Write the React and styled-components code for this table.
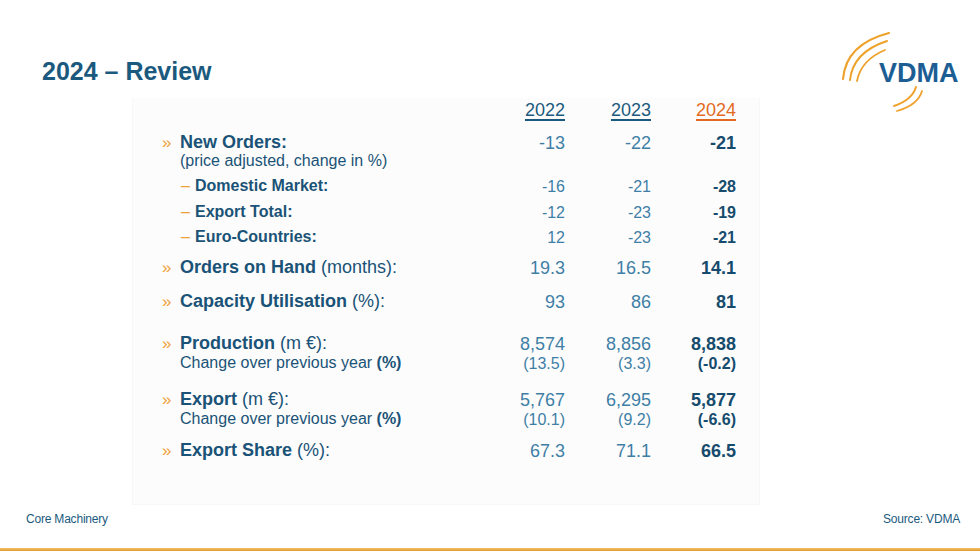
import React from "react"
import styled, { createGlobalStyle } from "styled-components"

const GlobalStyle = createGlobalStyle`
  html, body {
    margin: 0;
    padding: 0;
    background: #ffffff;
  }
  body {
    font-family: "Liberation Sans", Arial, sans-serif;
  }
`

const colors = {
  title: "#1b5a7e",
  label: "#1a5377",
  value: "#3f7fa6",
  strong: "#164b6d",
  orange: "#f0a03a",
  year: "#e36a22",
}

const Slide = styled.div`
  width: 980px;
  height: 560px;
  display: flex;
  flex-direction: column;
  overflow: hidden;
`

const Header = styled.header`
  height: 98px;
  display: flex;
  justify-content: space-between;
  align-items: flex-start;
`

const Title = styled.h1`
  margin: 56px 0 0 42px;
  font-size: 25px;
  line-height: 30px;
  font-weight: 700;
  color: ${colors.title};
`

const LogoBox = styled.div`
  margin: 30px 16px 0 0;
  width: 124px;
  height: 84px;
  flex: none;
`

const Panel = styled.section`
  margin-left: 132px;
  width: 628px;
  height: 407px;
  box-sizing: border-box;
  padding: 2px 0 0 29px;
  background: #fcfcfc;
  border: 1px solid #f7f7f7;
  border-top: none;
`

const Row = styled.div`
  display: grid;
  grid-template-columns: 317px 86px 86px 85px;
  align-items: center;
  height: 20px;
  margin-top: ${p => p.$gap || 0}px;
  font-size: ${p => p.$size}px;
`

const Label = styled.div`
  display: flex;
  align-items: center;
  white-space: nowrap;
  color: ${colors.label};
  padding-left: ${p => p.$indent || 0}px;
`

const Bullet = styled.span`
  width: 18px;
  color: ${colors.orange};
  font-size: 17px;
`

const Dash = styled.span`
  width: 14px;
  color: ${colors.orange};
`

const B = styled.b`
  font-weight: 700;
`

const Value = styled.div`
  text-align: right;
  padding-top: ${p => p.$drop || 0}px;
  color: ${p => (p.$strong ? colors.strong : colors.value)};
  font-weight: ${p => (p.$strong ? 700 : 400)};
`

const Year = styled.div`
  text-align: right;
  font-size: 18px;
  span {
    color: ${p => (p.$current ? colors.year : colors.title)};
    text-decoration: underline;
    text-underline-offset: 3px;
    text-decoration-thickness: 1.5px;
  }
`

const Footer = styled.footer`
  margin-top: 6px;
  height: 16px;
  display: flex;
  justify-content: space-between;
  align-items: center;
  padding: 0 20px 0 26px;
  font-size: 12px;
  letter-spacing: -0.2px;
  color: ${colors.title};
`

const Rule = styled.div`
  margin-top: 21px;
  height: 3px;
  background: linear-gradient(#f3c46f, #e59a2c);
`

const Logo = () => (
  <svg width="124" height="84" viewBox="840 30 124 84">
    <g fill="none" stroke="#eea22c" strokeLinecap="round">
      <path d="M843 79 Q846 44 889 33" strokeWidth="2.2" />
      <path d="M850 80 Q853 52 887 41" strokeWidth="2" />
      <path d="M857 81 Q861 60 885 50" strokeWidth="1.8" />
      <path d="M894 106 Q912 100 916 87" strokeWidth="2" />
      <path d="M897 111 Q918 105 922 91" strokeWidth="1.8" />
    </g>
    <text
      x="879"
      y="82"
      fill="#1c5e94"
      fontFamily="Liberation Sans, Arial, sans-serif"
      fontWeight="700"
      fontSize="27"
    >
      VDMA
    </text>
  </svg>
)

const rows = [
  { gap: 11, size: 18, bullet: true, label: <B>New Orders:</B>, values: ["-13", "-22", "-21"] },
  { gap: 0, size: 16, indent: 18, label: "(price adjusted, change in %)" },
  { gap: 4, size: 16, dash: true, label: <B>Domestic Market:</B>, values: ["-16", "-21", "-28"] },
  { gap: 6, size: 16, dash: true, label: <B>Export Total:</B>, values: ["-12", "-23", "-19"] },
  { gap: 5, size: 16, dash: true, label: <B>Euro-Countries:</B>, values: ["12", "-23", "-21"] },
  { gap: 10, size: 18, bullet: true, label: <><B>Orders on Hand</B>&nbsp;(months):</>, values: ["19.3", "16.5", "14.1"] },
  { gap: 14, size: 18, bullet: true, label: <><B>Capacity Utilisation</B>&nbsp;(%):</>, values: ["93", "86", "81"] },
  { gap: 22, size: 18, bullet: true, label: <><B>Production</B>&nbsp;(m €):</>, values: ["8,574", "8,856", "8,838"] },
  { gap: 1, size: 16, indent: 18, label: <>Change over previous year&nbsp;<B>(%)</B></>, values: ["(13.5)", "(3.3)", "(-0.2)"] },
  { gap: 15, size: 18, bullet: true, label: <><B>Export</B>&nbsp;(m €):</>, values: ["5,767", "6,295", "5,877"] },
  { gap: 1, size: 16, indent: 18, label: <>Change over previous year&nbsp;<B>(%)</B></>, values: ["(10.1)", "(9.2)", "(-6.6)"] },
  { gap: 10, size: 18, bullet: true, label: <><B>Export Share</B>&nbsp;(%):</>, values: ["67.3", "71.1", "66.5"] },
]

export default function App() {
  return (
    <Slide>
      <GlobalStyle />
      <Header>
        <Title>2024 – Review</Title>
        <LogoBox>
          <Logo />
        </LogoBox>
      </Header>
      <Panel>
        <Row $size={18}>
          <div />
          <Year><span>2022</span></Year>
          <Year><span>2023</span></Year>
          <Year $current><span>2024</span></Year>
        </Row>
        {rows.map((r, i) => (
          <Row key={i} $gap={r.gap} $size={r.size}>
            <Label $indent={r.dash ? 19 : r.indent}>
              {r.bullet && <Bullet>»</Bullet>}
              {r.dash && <Dash>–</Dash>}
              <span>{r.label}</span>
            </Label>
            {r.values ? (
              r.values.map((v, j) => (
                <Value key={j} $strong={j === 2} $drop={r.dash ? 3 : 2}>{v}</Value>
              ))
            ) : (
              <>
                <div />
                <div />
                <div />
              </>
            )}
          </Row>
        ))}
      </Panel>
      <Footer>
        <span>Core Machinery</span>
        <span>Source: VDMA</span>
      </Footer>
      <Rule />
    </Slide>
  )
}
